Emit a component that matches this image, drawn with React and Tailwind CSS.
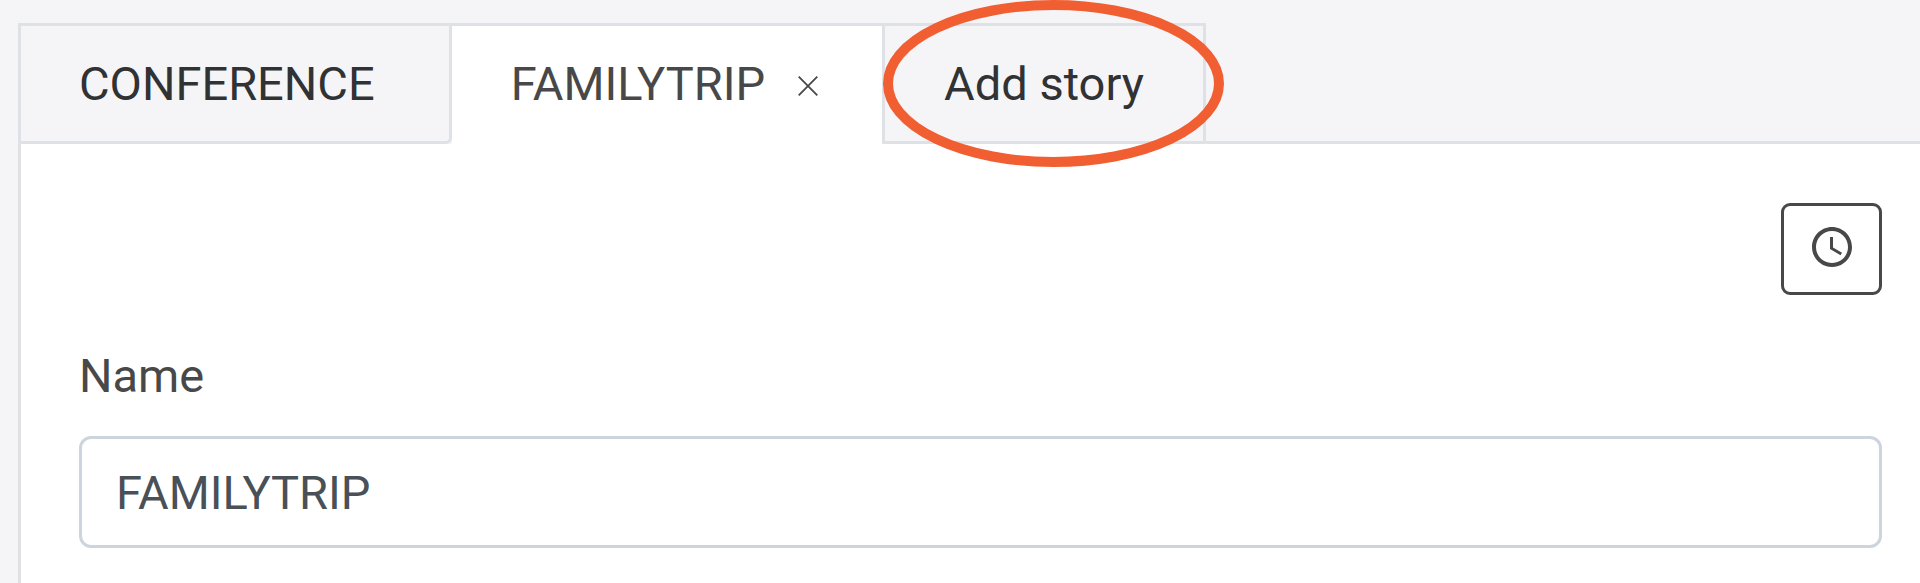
import { MdSchedule } from "react-icons/md";

function CloseIcon() {
  return (
    <svg className="size-5" viewBox="0 0 20 20" fill="none" stroke="#484848" strokeWidth="1.8" aria-hidden="true">
      <path d="M0.7 0.7 19.3 19.3M19.3 0.7 0.7 19.3" />
    </svg>
  );
}

function Highlight() {
  return (
    <svg
      className="pointer-events-none absolute -top-[23px] left-px h-[167px] w-[341px] max-w-none"
      viewBox="0 0 341 167"
      fill="none"
      aria-hidden="true"
    >
      <ellipse cx="170.5" cy="83.5" rx="165.5" ry="78.5" stroke="#f15e31" strokeWidth="10" />
    </svg>
  );
}

function Tabs() {
  return (
    <nav className="flex text-[47px] leading-[71px] text-[#303234]" aria-label="Stories">
      <button
        type="button"
        className="rounded-br-md border-[3px] border-[#dee2e6] py-[22px] pr-[74px] pl-[58px] whitespace-nowrap"
      >
        CONFERENCE
      </button>
      <div className="flex items-center gap-[33px] border-t-[3px] border-[#dee2e6] bg-white pr-16 pb-[3px] pl-[59px] text-[#484848]">
        <button type="button" className="whitespace-nowrap">FAMILYTRIP</button>
        <button type="button" aria-label="Close FAMILYTRIP" className="pt-1">
          <CloseIcon />
        </button>
      </div>
      <div className="relative flex">
        <button type="button" className="border-[3px] border-[#dee2e6] px-[59px] whitespace-nowrap">
          Add story
        </button>
        <Highlight />
      </div>
      <div className="grow border-b-[3px] border-[#dee2e6]" />
    </nav>
  );
}

export default function App() {
  return (
    <div className="flex min-h-screen flex-col overflow-x-hidden bg-[#f5f5f8] pt-[23px] pl-[18px] font-['Roboto',sans-serif]">
      <Tabs />
      <main className="flex grow flex-col border-l-[3px] border-[#dfe0e1] bg-white pt-[59px] pr-[38px] pl-[58px]">
        <div className="flex justify-end">
          <button
            type="button"
            aria-label="History"
            className="flex h-[92px] w-[101px] items-center justify-center rounded-[9px] border-[3px] border-[#484848] pb-1 text-[#484848]"
          >
            <MdSchedule className="size-12" />
          </button>
        </div>
        <label htmlFor="story-name" className="mt-[45px] mb-[25px] text-[47px] leading-[71px] text-[#484848]">
          Name
        </label>
        <input
          id="story-name"
          type="text"
          defaultValue="FAMILYTRIP"
          className="h-28 w-full rounded-xl border-[3px] border-[#ced4dd] bg-white px-[34px] text-[47px] text-[#495057] outline-none"
        />
      </main>
    </div>
  );
}
